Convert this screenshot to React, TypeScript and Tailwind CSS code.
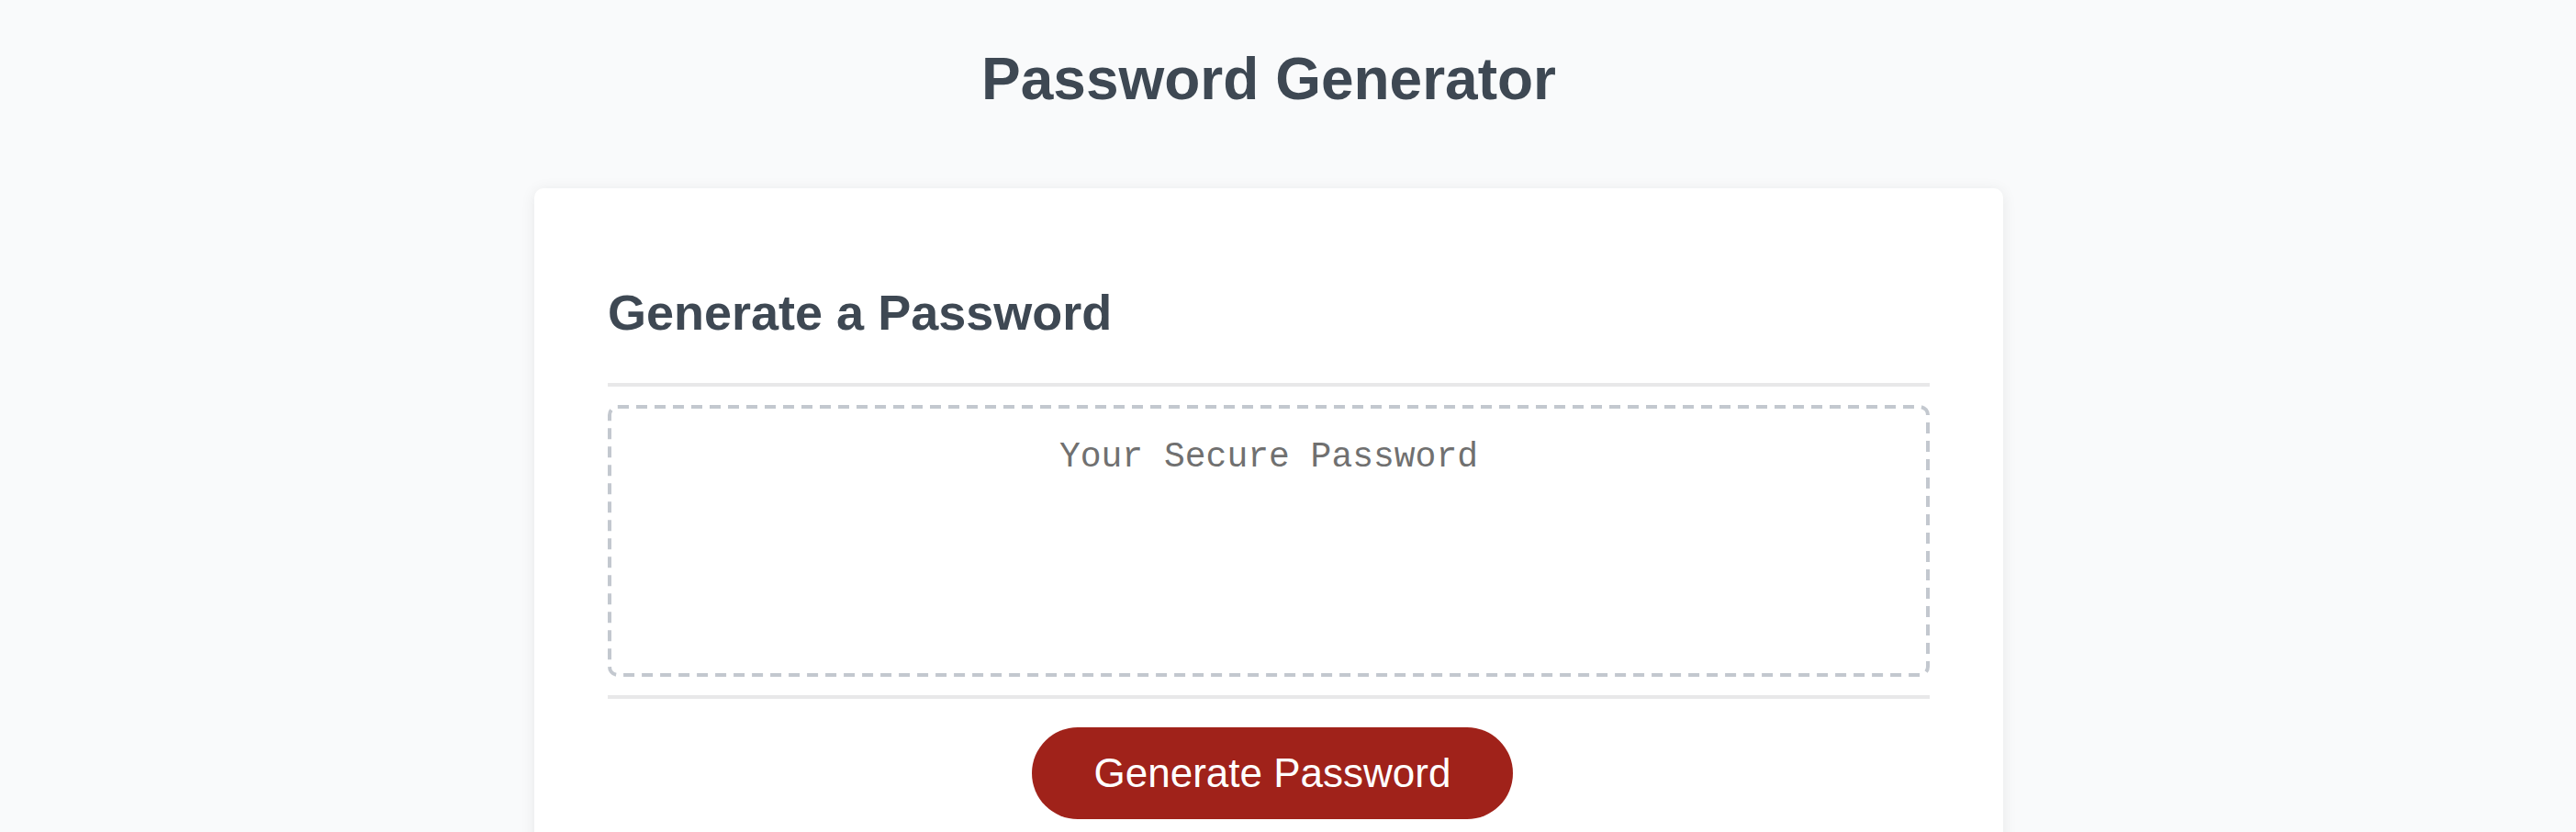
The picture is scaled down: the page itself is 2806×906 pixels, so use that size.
const SANS = 'font-["Liberation_Sans",Arial,sans-serif]';

function Divider() {
  return <div className="h-[4px] bg-[#e8e8e9]" />;
}

// dashed outline drawn in svg so the dash rhythm matches (12 on / 8 off)
function DashedOutline() {
  return (
    <svg className="pointer-events-none absolute inset-0" width="1440" height="296" viewBox="0 0 1440 296">
      <rect x="2" y="2" width="1436" height="292" rx="9" fill="none" stroke="#c3c8cf" strokeWidth="4" strokeDasharray="12 8" />
    </svg>
  );
}

function PasswordBox() {
  return (
    <div className="relative h-[296px] pt-[38px] text-center">
      <DashedOutline />
      <span className='font-["Liberation_Mono","Courier_New",monospace] text-[38px] leading-none text-[#707070]'>
        Your Secure Password
      </span>
    </div>
  );
}

export default function App() {
  return (
    <div className={`min-h-screen bg-[#f9fafb] pr-[42px] ${SANS}`}>
      <h1 className="pt-[54px] text-center text-[64px] font-bold leading-none text-[#3e4853]">
        Password Generator
      </h1>

      <div className="mx-auto mt-[87px] w-[1600px] rounded-[10px] bg-white px-[80px] pt-[108px] pb-[80px] shadow-[0_2px_16px_rgba(0,0,0,0.08)]">
        <h2 className="text-[54px] font-bold leading-none text-[#3e4853]">Generate a Password</h2>

        <div className="mt-[50px] flex flex-col gap-[20px]">
          <Divider />
          <PasswordBox />
          <Divider />
        </div>

        <div className="mt-[31px] flex justify-center pl-[8px]">
          <button className="h-[100px] w-[524px] rounded-full bg-[#a0221a] text-[44px] leading-none text-white">
            Generate Password
          </button>
        </div>
      </div>
    </div>
  );
}
